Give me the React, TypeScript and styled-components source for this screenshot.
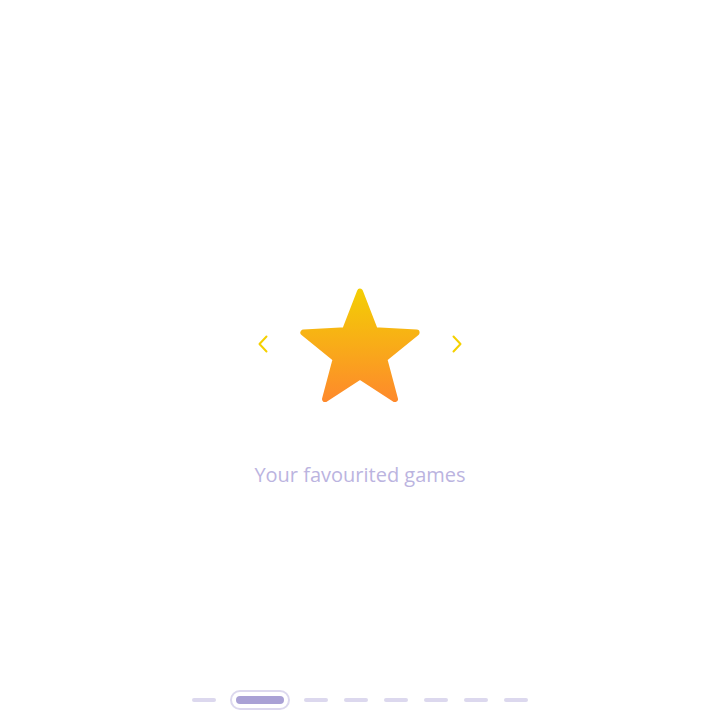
import React from "react";
import styled, { createGlobalStyle } from "styled-components";

const Global = createGlobalStyle`
  html, body { margin: 0; padding: 0; background: #ffffff; }
  body { font-family: "Open Sans", "Liberation Sans", sans-serif; }
`;

const Page = styled.div`
  width: 720px;
  height: 720px;
  display: flex;
  flex-direction: column;
  align-items: center;
  box-sizing: border-box;
  padding-top: 288px;
  padding-bottom: 10px;
`;

const Carousel = styled.div`
  display: flex;
  align-items: center;
  gap: 32px;
`;

const Arrow = styled.button`
  border: 0;
  background: none;
  padding: 0;
  margin-bottom: 2px;
  width: 10px;
  height: 18px;
  display: flex;
  align-items: center;
  justify-content: center;
  cursor: pointer;
  svg { display: block; }
`;

const StarIcon = styled.svg`
  display: block;
  width: 120px;
  height: 114px;
`;

const Caption = styled.p`
  margin: 59px 0 0;
  font-size: 20px;
  line-height: 28px;
  color: #bbb4df;
  font-weight: 400;
`;

const Dots = styled.div`
  margin-top: auto;
  height: 21px;
  display: flex;
  align-items: center;
  gap: 16px;
`;

const Dot = styled.span<{ $active?: boolean }>`
  position: relative;
  display: block;
  width: ${(p) => (p.$active ? 48 : 24)}px;
  height: ${(p) => (p.$active ? 8 : 4)}px;
  border-radius: 4px;
  margin: ${(p) => (p.$active ? "0 4px" : "0")};
  background: ${(p) => (p.$active ? "#a9a1d5" : "#dcd8ee")};
  ${(p) =>
    p.$active &&
    `
    &::after {
      content: "";
      position: absolute;
      inset: -6px;
      border: 2px solid #dcd8ee;
      border-radius: 11px;
    }
  `}
`;

const Chevron = ({ dir }: { dir: "left" | "right" }) => (
  <svg width="10" height="18" viewBox="0 0 10 18">
    <path
      d={dir === "left" ? "M8.5 1.5 L1.5 9 L8.5 16.5" : "M1.5 1.5 L8.5 9 L1.5 16.5"}
      fill="none"
      stroke="#f5d000"
      strokeWidth="2"
      strokeLinecap="round"
      strokeLinejoin="round"
    />
  </svg>
);

function starPoints(cx: number, cy: number, R: number, r: number) {
  const pts: string[] = [];
  for (let i = 0; i < 10; i++) {
    const rad = i % 2 === 0 ? R : r;
    const a = (Math.PI / 5) * i - Math.PI / 2;
    pts.push(`${(cx + rad * Math.cos(a)).toFixed(2)},${(cy + rad * Math.sin(a)).toFixed(2)}`);
  }
  return pts.join(" ");
}

const Star = () => (
  <StarIcon viewBox="0 0 120 114">
    <defs>
      <linearGradient id="starGrad" x1="0" y1="0" x2="0" y2="114" gradientUnits="userSpaceOnUse">
        <stop offset="0" stopColor="#f3cf04" />
        <stop offset="1" stopColor="#fe892c" />
      </linearGradient>
    </defs>
    <polygon
      points={starPoints(60, 63, 59.5, 25.5)}
      fill="url(#starGrad)"
      stroke="url(#starGrad)"
      strokeWidth="6"
      strokeLinejoin="round"
    />
  </StarIcon>
);

export default function App() {
  const dots = [false, true, false, false, false, false, false, false];
  return (
    <>
      <Global />
      <Page>
        <Carousel>
          <Arrow aria-label="Previous">
            <Chevron dir="left" />
          </Arrow>
          <Star />
          <Arrow aria-label="Next">
            <Chevron dir="right" />
          </Arrow>
        </Carousel>
        <Caption>Your favourited games</Caption>
        <Dots>
          {dots.map((a, i) => (
            <Dot key={i} $active={a} />
          ))}
        </Dots>
      </Page>
    </>
  );
}
